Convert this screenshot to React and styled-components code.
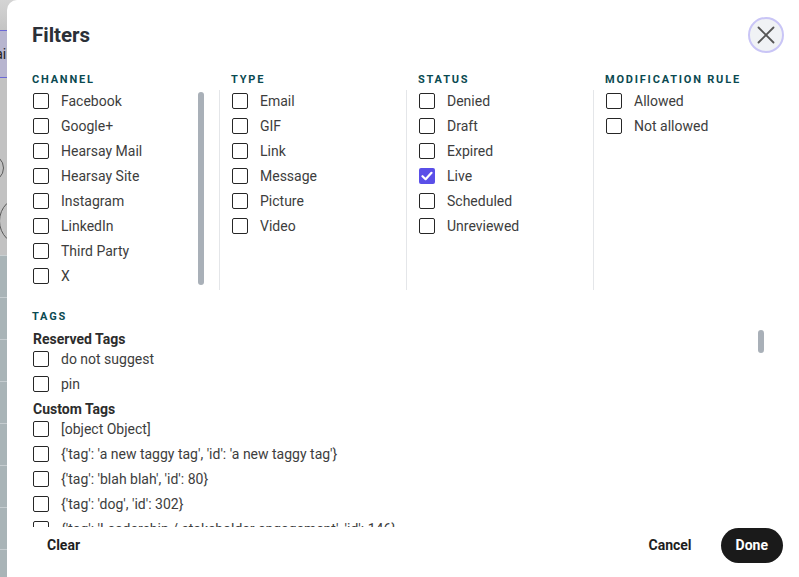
import React from "react"
import styled, { createGlobalStyle } from "styled-components"

const Global = createGlobalStyle`
    html, body {
        margin: 0;
        padding: 0;
    }
    body {
        font-family: Roboto, "Liberation Sans", sans-serif;
        -webkit-font-smoothing: antialiased;
    }
`

const Page = styled.div`
    position: relative;
    width: 799px;
    height: 577px;
    overflow: hidden;
    background: #c3c3c3;
`

const Backdrop = styled.div`
    display: flex;
    flex-direction: column;
    height: 100%;
`

const BackdropTop = styled.div`
    height: 30px;
    flex-shrink: 0;
    background: linear-gradient(180deg, #d4d4d4, #c4c4c4);
`

const BackdropTab = styled.div`
    height: 46px;
    flex-shrink: 0;
    display: flex;
    align-items: center;
    background: #b7b5cf;
    border-top: 1px solid #6b68d6;
    border-bottom: 1px solid #6b68d6;
    font-size: 14px;
    color: #222;
    text-indent: -17px;
`

const BackdropMid = styled.div`
    height: 177px;
    flex-shrink: 0;
    box-sizing: border-box;
    display: flex;
    flex-direction: column;
    padding-top: 76px;
    gap: 14px;
    background: #c2c2c2;
`

const BackdropCircle = styled.div`
    width: ${p => p.$size}px;
    height: ${p => p.$size}px;
    margin-left: ${p => p.$offset}px;
    flex-shrink: 0;
    border: 1px solid #5a5a5a;
    border-radius: 50%;
`

const BackdropRows = styled.div`
    flex: 1;
    min-height: 0;
    overflow: hidden;
    background: #a9b4b7;
    border-top: 1px solid #c9d0d2;
`

const BackdropRow = styled.div`
    height: 41px;
    border-bottom: 1px solid #c6cdd0;
`

const Modal = styled.div`
    position: absolute;
    top: 0;
    left: 7px;
    width: 792px;
    height: 600px;
    box-sizing: border-box;
    padding: 17px 15px 0 25px;
    background: #fff;
    border-radius: 10px 0 0 0;
    display: flex;
    flex-direction: column;
`

const Header = styled.div`
    display: flex;
    justify-content: space-between;
    align-items: center;
    height: 36px;
`

const Title = styled.h2`
    margin: 0;
    font-size: 20.5px;
    font-weight: 700;
    color: #2b3038;
`

const CloseButton = styled.button`
    width: 36px;
    height: 36px;
    padding: 0;
    display: flex;
    align-items: center;
    justify-content: center;
    border-radius: 50%;
    border: 2px solid #c9c5f6;
    background: #f0f2f5;
    color: #555;
`

const Columns = styled.div`
    display: grid;
    grid-template-columns: repeat(4, 187px);
    margin-top: 20px;
`

const Column = styled.div`
    display: flex;
    flex-direction: column;
`

const Heading = styled.div`
    font-size: 11px;
    line-height: 14px;
    font-weight: 700;
    letter-spacing: 1.8px;
    text-transform: uppercase;
    color: #0a4a51;
    padding-left: ${p => (p.$indent ? 12 : 0)}px;
`

const List = styled.div`
    position: relative;
    margin-top: 3px;
    height: 200px;
    box-sizing: border-box;
    padding: 1px 0 0 ${p => (p.$divided ? 12 : 1)}px;
    border-left: ${p => (p.$divided ? "1px solid #e4e6e9" : "none")};
    display: flex;
    flex-direction: column;
    gap: 5px;
    overflow: hidden;
    margin-right: ${p => (p.$scroll ? 12 : 0)}px;
`

const Thumb = styled.div`
    position: absolute;
    right: ${p => p.$right}px;
    top: ${p => p.$top}px;
    width: 6px;
    height: ${p => p.$height}px;
    border-radius: 3px;
    background: #a9b0b8;
`

const Row = styled.label`
    display: flex;
    align-items: center;
    gap: 12px;
    height: 20px;
    flex-shrink: 0;
    font-size: 14px;
    color: #3d3d3d;
    white-space: nowrap;
`

const Box = styled.span`
    width: 16px;
    height: 16px;
    box-sizing: border-box;
    flex-shrink: 0;
    display: flex;
    align-items: center;
    justify-content: center;
    border-radius: 2px;
    border: ${p => (p.$checked ? "none" : "1.5px solid #262626")};
    background: ${p => (p.$checked ? "#5a4fe8" : "#fff")};
`

const TagsHeading = styled(Heading)`
    margin-top: 20px;
`

const TagScroll = styled.div`
    position: relative;
    margin-top: 5px;
    width: 733px;
    height: 198px;
    flex-shrink: 0;
    overflow: hidden;
    display: flex;
    flex-direction: column;
    gap: 5px;
    padding-left: 1px;
    box-sizing: border-box;
`

const TagGroup = styled.div`
    display: flex;
    flex-direction: column;
    gap: 5px;
`

const GroupTitle = styled.div`
    height: 20px;
    line-height: 20px;
    margin-bottom: -5px;
    font-size: 14px;
    font-weight: 700;
    color: #2c2c2c;
    flex-shrink: 0;
`

const Footer = styled.div`
    height: 36px;
    flex-shrink: 0;
    display: flex;
    align-items: center;
    justify-content: space-between;
`

const Actions = styled.div`
    display: flex;
    align-items: center;
    gap: 14px;
    margin-right: 1px;
`

const TextButton = styled.button`
    height: 35px;
    padding: 0 15px;
    border: none;
    background: transparent;
    font-family: inherit;
    font-size: 14px;
    font-weight: 700;
    color: #1e1e1e;
`

const PrimaryButton = styled(TextButton)`
    padding: 0 15px;
    border-radius: 18px;
    background: #1a1a1a;
    color: #fff;
`

const Check = () => (
    <svg width="12" height="10" viewBox="0 0 12 10">
        <path d="M1.5 5.2 L4.6 8.2 L10.5 1.8" fill="none" stroke="#fff" strokeWidth="2.2" strokeLinecap="round" strokeLinejoin="round" />
    </svg>
)

const Checkbox = ({ label, checked }) => (
    <Row>
        <Box $checked={checked}>{checked && <Check />}</Box>
        {label}
    </Row>
)

const columns = [
    { title: "Channel", items: ["Facebook", "Google+", "Hearsay Mail", "Hearsay Site", "Instagram", "LinkedIn", "Third Party", "X"], scroll: true },
    { title: "Type", items: ["Email", "GIF", "Link", "Message", "Picture", "Video"] },
    { title: "Status", items: ["Denied", "Draft", "Expired", "Live", "Scheduled", "Unreviewed"], checked: ["Live"] },
    { title: "Modification Rule", items: ["Allowed", "Not allowed"] },
]

const customTags = [
    "[object Object]",
    "{'tag': 'a new taggy tag', 'id': 'a new taggy tag'}",
    "{'tag': 'blah blah', 'id': 80}",
    "{'tag': 'dog', 'id': 302}",
    "{'tag': 'Leadership / stakeholder engagement', 'id': 146}",
]

export default function App() {
    return (
        <Page>
            <Global />
            <Backdrop>
                <BackdropTop />
                <BackdropTab>Mail</BackdropTab>
                <BackdropMid>
                    <BackdropCircle $size={26} $offset={-24} />
                    <BackdropCircle $size={48} $offset={-1} />
                </BackdropMid>
                <BackdropRows>
                    {Array.from({ length: 8 }).map((_, i) => <BackdropRow key={i} />)}
                </BackdropRows>
            </Backdrop>

            <Modal>
                <Header>
                    <Title>Filters</Title>
                    <CloseButton aria-label="Close">
                        <svg width="18" height="18" viewBox="0 0 18 18">
                            <path d="M1.5 1.5 L16.5 16.5 M16.5 1.5 L1.5 16.5" stroke="#555" strokeWidth="1.8" strokeLinecap="round" />
                        </svg>
                    </CloseButton>
                </Header>

                <Columns>
                    {columns.map((col, i) => (
                        <Column key={col.title}>
                            <Heading $indent={i > 0}>{col.title}</Heading>
                            <List $divided={i > 0} $scroll={col.scroll}>
                                {col.items.map(item => (
                                    <Checkbox key={item} label={item} checked={col.checked && col.checked.includes(item)} />
                                ))}
                                {col.scroll && <Thumb $right={3} $top={2} $height={193} />}
                            </List>
                        </Column>
                    ))}
                </Columns>

                <TagsHeading>Tags</TagsHeading>
                <TagScroll>
                    <TagGroup>
                        <GroupTitle>Reserved Tags</GroupTitle>
                        <Checkbox label="do not suggest" />
                        <Checkbox label="pin" />
                    </TagGroup>
                    <TagGroup>
                        <GroupTitle>Custom Tags</GroupTitle>
                        {customTags.map(tag => <Checkbox key={tag} label={tag} />)}
                    </TagGroup>
                    <Thumb $right={1} $top={1} $height={23} />
                </TagScroll>

                <Footer>
                    <TextButton>Clear</TextButton>
                    <Actions>
                        <TextButton>Cancel</TextButton>
                        <PrimaryButton>Done</PrimaryButton>
                    </Actions>
                </Footer>
            </Modal>
        </Page>
    )
}
